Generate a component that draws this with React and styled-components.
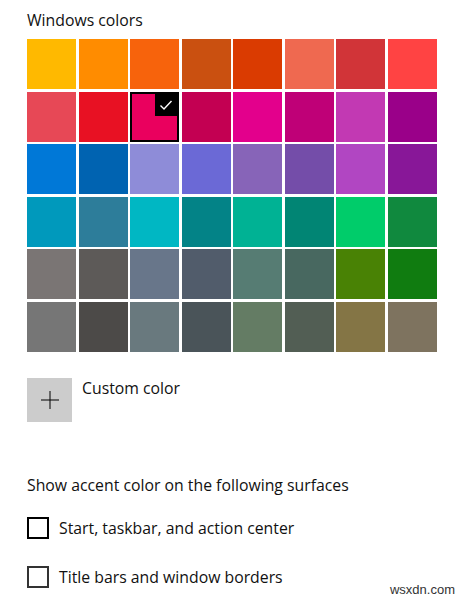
import styled, { createGlobalStyle } from "styled-components";

const GlobalStyle = createGlobalStyle`
  html, body {
    margin: 0;
    background: #fff;
  }
  body {
    font-family: "Open Sans", "Noto Sans", sans-serif;
    color: #000;
  }
`;

const palette = [
  ["#FFB900", "#FF8C00", "#F7630C", "#CA5010", "#DA3B01", "#EF6950", "#D13438", "#FF4343"],
  ["#E74856", "#E81123", "#EA005E", "#C30052", "#E3008C", "#BF0077", "#C239B3", "#9A0089"],
  ["#0078D7", "#0063B1", "#8E8CD8", "#6B69D6", "#8764B8", "#744DA9", "#B146C2", "#881798"],
  ["#0099BC", "#2D7D9A", "#00B7C3", "#038387", "#00B294", "#018574", "#00CC6A", "#10893E"],
  ["#7A7574", "#5D5A58", "#68768A", "#515C6B", "#567C73", "#486860", "#498205", "#107C10"],
  ["#767676", "#4C4A48", "#69797E", "#4A5459", "#647C64", "#525E54", "#847545", "#7E735F"],
];

const selected = "#EA005E";

function App() {
  return (
    <Page>
      <GlobalStyle />
      <Title>Windows colors</Title>
      <Grid>
        {palette.flat().map((c) => (
          <Swatch key={c} $color={c} $active={c === selected}>
            {c === selected && (
              <Check>
                <svg width="14" height="14" viewBox="0 0 14 14">
                  <path d="M1.5 7.5 L5 11 L12.5 3" fill="none" stroke="#fff" strokeWidth="1.4" />
                </svg>
              </Check>
            )}
          </Swatch>
        ))}
      </Grid>

      <CustomRow>
        <PlusBox>
          <svg width="18" height="18" viewBox="0 0 18 18">
            <path d="M9 0 V18 M0 9 H18" stroke="#000" strokeWidth="1" />
          </svg>
        </PlusBox>
        <CustomLabel>Custom color</CustomLabel>
      </CustomRow>

      <Section>Show accent color on the following surfaces</Section>

      <Options>
        <Option>
          <Box $strong />
          <span>Start, taskbar, and action center</span>
        </Option>
        <Option>
          <Box />
          <span>Title bars and window borders</span>
        </Option>
      </Options>

      <Watermark>wsxdn.com</Watermark>
    </Page>
  );
}

export default App;

const Page = styled.div`
  position: relative;
  width: 467px;
  height: 600px;
  box-sizing: border-box;
  padding: 10px 0 0 27px;
  overflow: hidden;
`;

const Title = styled.div`
  font-size: 15.8px;
  line-height: 20px;
  color: #111;
`;

const Grid = styled.div`
  margin-top: 9px;
  display: grid;
  grid-template-columns: repeat(8, 49px);
  grid-auto-rows: 50px;
  column-gap: 2.5px;
  row-gap: 2.5px;
`;

const Swatch = styled.div`
  position: relative;
  background: ${(p) => p.$color};
  box-sizing: border-box;
  border: ${(p) => (p.$active ? "2px solid #000" : "none")};
`;

const Check = styled.div`
  position: absolute;
  top: 0;
  right: 0;
  width: 22px;
  height: 22px;
  background: #000;
  display: flex;
  align-items: center;
  justify-content: center;
`;

const CustomRow = styled.div`
  margin-top: 26px;
  display: flex;
  align-items: flex-start;
  gap: 10px;
`;

const PlusBox = styled.div`
  width: 45px;
  height: 44px;
  background: #cccccc;
  display: flex;
  align-items: center;
  justify-content: center;
`;

const CustomLabel = styled.div`
  font-size: 15.8px;
  line-height: 20px;
  color: #111;
`;

const Section = styled.div`
  margin-top: 53px;
  font-size: 15.8px;
  line-height: 20px;
  color: #111;
`;

const Options = styled.div`
  margin-top: 22px;
  display: flex;
  flex-direction: column;
  gap: 27px;
`;

const Option = styled.div`
  display: flex;
  align-items: center;
  gap: 10px;
  height: 22px;
  font-size: 15.8px;
  color: #111;
`;

const Box = styled.div`
  width: 22px;
  height: 22px;
  box-sizing: border-box;
  border: 2px solid ${(p) => (p.$strong ? "#000" : "#333")};
`;

const Watermark = styled.div`
  position: absolute;
  right: 12px;
  bottom: 3px;
  font-family: "Liberation Sans", Arial, sans-serif;
  font-size: 13px;
  color: #333;
`;
